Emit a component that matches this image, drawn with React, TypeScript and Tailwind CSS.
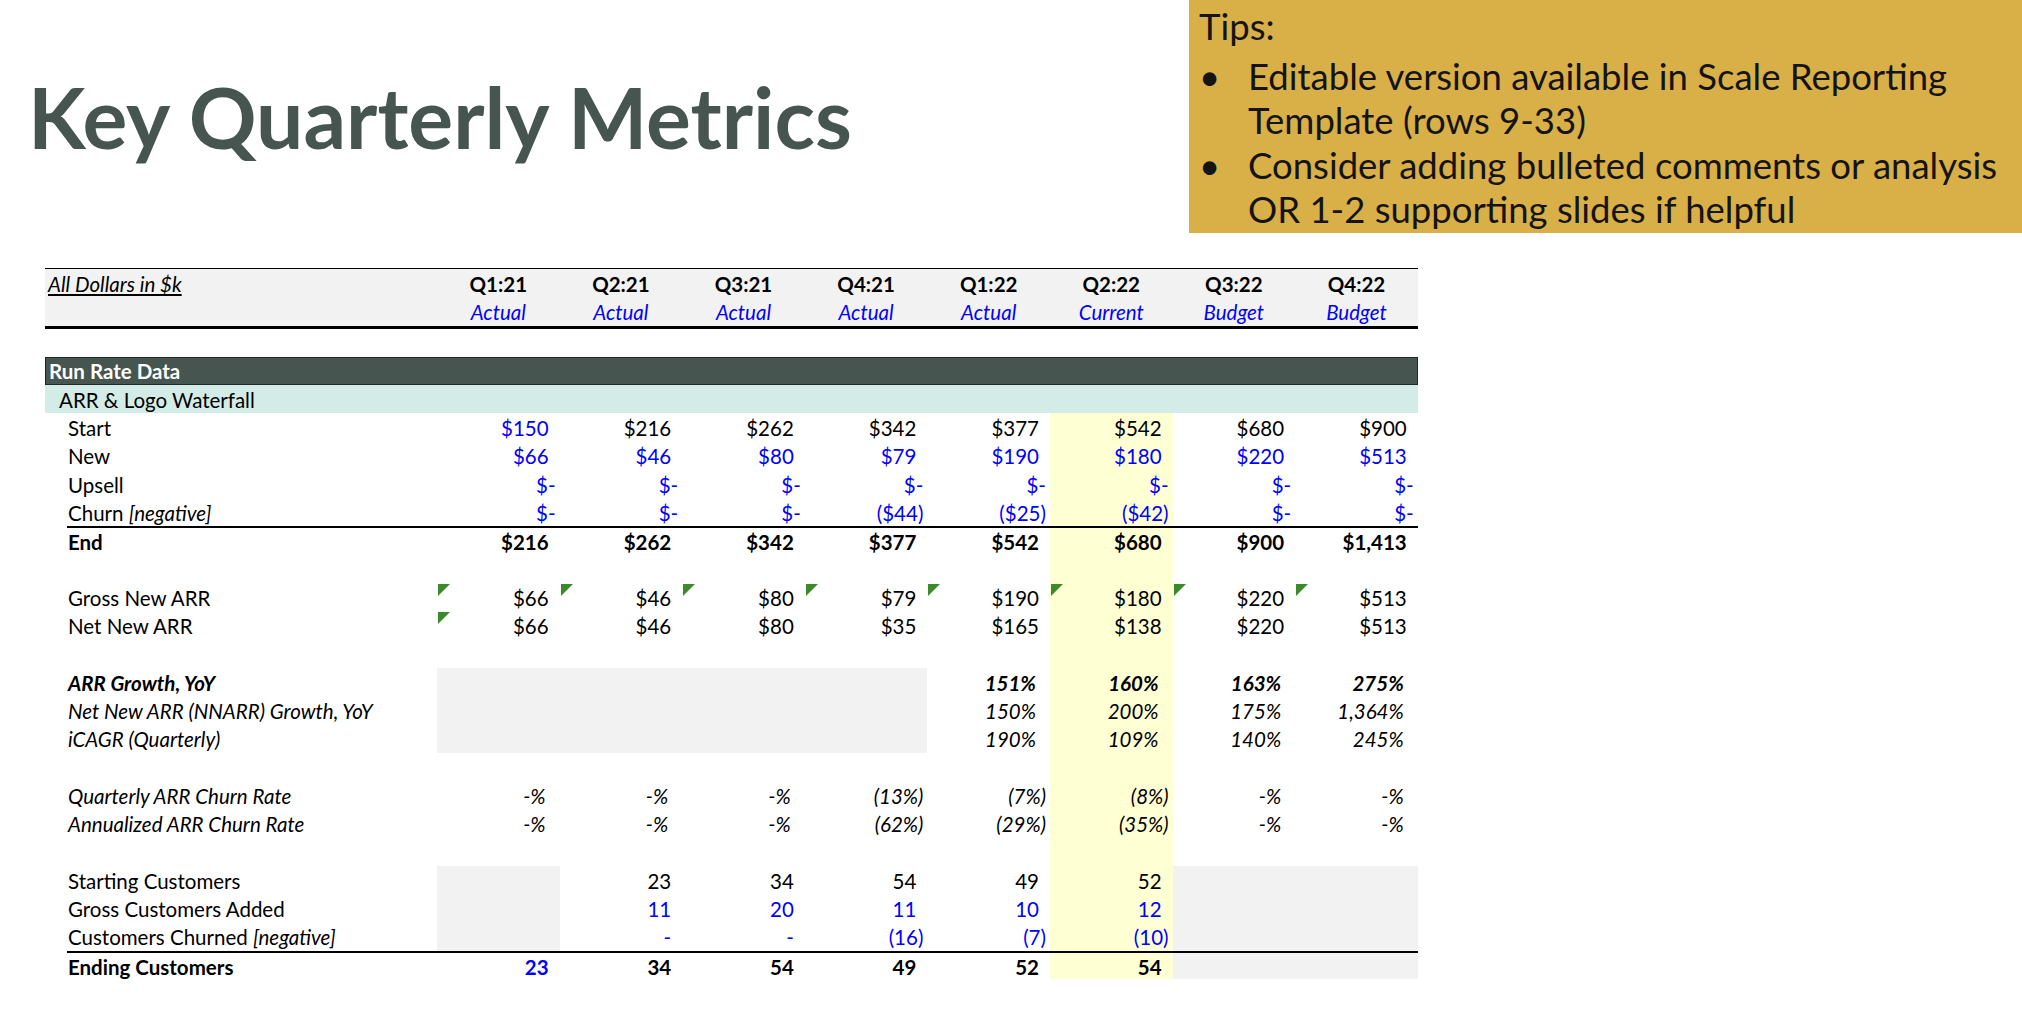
import React from 'react';

const quarters = ['Q1:21', 'Q2:21', 'Q3:21', 'Q4:21', 'Q1:22', 'Q2:22', 'Q3:22', 'Q4:22'];
const scenarios = ['Actual', 'Actual', 'Actual', 'Actual', 'Actual', 'Current', 'Budget', 'Budget'];

interface RowProps {
  label?: React.ReactNode;
  values?: string[];
  blue?: boolean | boolean[];
  bold?: boolean;
  italic?: boolean;
  gray?: number[];
  rule?: boolean;
  marks?: number[];
}

// right padding mimics Excel's accounting formats (room kept for the closing paren)
const padFor = (v: string) => {
  if (v.endsWith('%')) return v.startsWith('(') ? 'pr-[7px]' : 'pr-[14px]';
  if (v === '$-' || v.startsWith('(')) return 'pr-[4px]';
  return 'pr-[11px]';
};

const Row: React.FC<RowProps> = ({
  label,
  values = [],
  blue = false,
  bold = false,
  italic = false,
  gray = [],
  rule = false,
  marks = [],
}) => {
  const weight = `${bold ? 'font-bold' : ''} ${italic ? 'italic' : ''}`;
  return (
    <div className={`flex h-[28.3px] ${rule ? 'ml-[22px] border-t-2 border-black' : ''}`}>
      <div
        className={`flex items-center whitespace-nowrap pt-[2px] ${rule ? 'w-[370px] pl-[1px]' : 'w-[392px] pl-[23px]'} ${weight}`}
      >
        {label}
      </div>
      {quarters.map((_, i) => {
        const v = values[i] ?? '';
        const isBlue = Array.isArray(blue) ? blue[i] : blue;
        const bg = gray.includes(i) ? 'bg-[#F2F2F2]' : i === 5 ? 'bg-[#FFFFD4]' : '';
        return (
          <div
            key={i}
            className={`relative flex w-[122.6px] items-center justify-end pt-[2px] ${bg} ${v ? padFor(v) : ''} ${
              isBlue ? 'text-[#0000FF]' : 'text-black'
            } ${weight}`}
          >
            {marks.includes(i) && (
              <span className="absolute left-[1px] top-[1px] h-0 w-0 border-r-[12px] border-t-[12px] border-r-transparent border-t-[#3B8A2C]" />
            )}
            {v}
          </div>
        );
      })}
    </div>
  );
};

const Blank = () => <Row />;

export default function App() {
  return (
    <div className="h-[1010px] w-[2022px] overflow-hidden bg-white font-['Lato',sans-serif] text-black">
      <div className="flex h-[233px] justify-between">
        <h1 className="pl-[28px] pt-[75px] text-[84px] font-bold leading-none text-[#46554F]">
          Key Quarterly Metrics
        </h1>
        <div className="w-[833px] bg-[#D9AF47] pl-[10px] pt-[4px] text-[36.5px] leading-[44.5px] text-[#141414]">
          <div className="mb-[5px]">Tips:</div>
          <div className="flex">
            <span className="w-[49px]">•</span>
            <span>
              Editable version available in Scale Reporting
              <br />
              Template (rows 9-33)
            </span>
          </div>
          <div className="flex">
            <span className="w-[49px]">•</span>
            <span>
              Consider adding bulleted comments or analysis
              <br />
              OR 1-2 supporting slides if helpful
            </span>
          </div>
        </div>
      </div>

      <div className="ml-[45px] mt-[35px] w-[1373px] text-[20.5px]">
        <div className="border-b-[3px] border-t border-black bg-[#F2F2F2]">
          <div className="flex h-[28.4px] items-center pt-[3px]">
            <div className="w-[392px] pl-[3px] italic underline">All Dollars in $k</div>
            {quarters.map((q) => (
              <div key={q} className="w-[122.6px] text-center font-bold">
                {q}
              </div>
            ))}
          </div>
          <div className="flex h-[28.4px] items-center pt-[1px]">
            <div className="w-[392px]" />
            {scenarios.map((s, i) => (
              <div key={i} className="w-[122.6px] text-center italic text-[#0000FF]">
                {s}
              </div>
            ))}
          </div>
        </div>

        <div className="h-[27.9px]" />

        <div className="flex h-[28.3px] items-center border border-[#1f2824] bg-[#46554F] pl-[3px] pt-[2px] font-bold text-white">
          Run Rate Data
        </div>
        <div className="flex h-[28.3px] items-center bg-[#D4ECE7] pl-[14px] pt-[2px]">ARR &amp; Logo Waterfall</div>

        <Row
          label="Start"
          values={['$150', '$216', '$262', '$342', '$377', '$542', '$680', '$900']}
          blue={[true, false, false, false, false, false, false, false]}
        />
        <Row label="New" values={['$66', '$46', '$80', '$79', '$190', '$180', '$220', '$513']} blue />
        <Row label="Upsell" values={['$-', '$-', '$-', '$-', '$-', '$-', '$-', '$-']} blue />
        <Row
          label={
            <>
              Churn&nbsp;<i>[negative]</i>
            </>
          }
          values={['$-', '$-', '$-', '($44)', '($25)', '($42)', '$-', '$-']}
          blue
        />
        <Row rule bold label="End" values={['$216', '$262', '$342', '$377', '$542', '$680', '$900', '$1,413']} />
        <Blank />
        <Row
          label="Gross New ARR"
          values={['$66', '$46', '$80', '$79', '$190', '$180', '$220', '$513']}
          marks={[0, 1, 2, 3, 4, 5, 6, 7]}
        />
        <Row label="Net New ARR" values={['$66', '$46', '$80', '$35', '$165', '$138', '$220', '$513']} marks={[0]} />
        <Blank />
        <Row bold italic label="ARR Growth, YoY" values={['', '', '', '', '151%', '160%', '163%', '275%']} gray={[0, 1, 2, 3]} />
        <Row
          italic
          label="Net New ARR (NNARR) Growth, YoY"
          values={['', '', '', '', '150%', '200%', '175%', '1,364%']}
          gray={[0, 1, 2, 3]}
        />
        <Row italic label="iCAGR (Quarterly)" values={['', '', '', '', '190%', '109%', '140%', '245%']} gray={[0, 1, 2, 3]} />
        <Blank />
        <Row italic label="Quarterly ARR Churn Rate" values={['-%', '-%', '-%', '(13%)', '(7%)', '(8%)', '-%', '-%']} />
        <Row italic label="Annualized ARR Churn Rate" values={['-%', '-%', '-%', '(62%)', '(29%)', '(35%)', '-%', '-%']} />
        <Blank />
        <Row label="Starting Customers" values={['', '23', '34', '54', '49', '52']} gray={[0, 6, 7]} />
        <Row label="Gross Customers Added" values={['', '11', '20', '11', '10', '12']} blue gray={[0, 6, 7]} />
        <Row
          label={
            <>
              Customers Churned&nbsp;<i>[negative]</i>
            </>
          }
          values={['', '-', '-', '(16)', '(7)', '(10)']}
          blue
          gray={[0, 6, 7]}
        />
        <Row
          rule
          bold
          label="Ending Customers"
          values={['23', '34', '54', '49', '52', '54']}
          blue={[true, false, false, false, false, false, false, false]}
          gray={[6, 7]}
        />
      </div>
    </div>
  );
}
